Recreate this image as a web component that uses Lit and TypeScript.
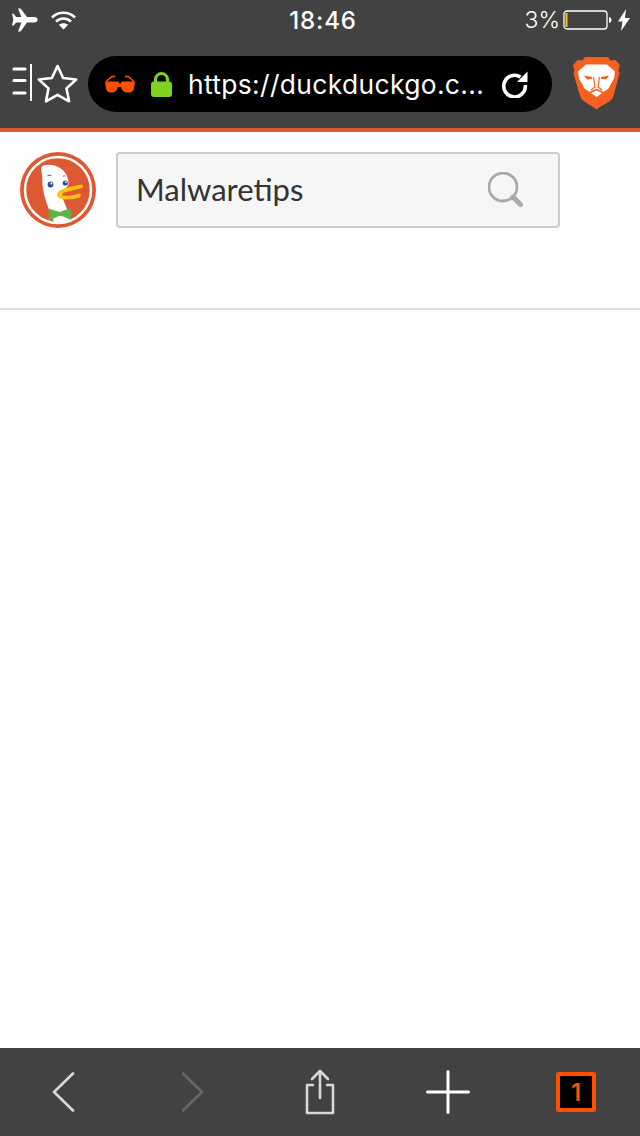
import { LitElement, html, css } from "lit";
import { customElement } from "lit/decorators.js";

@customElement("app-root")
export class AppRoot extends LitElement {
  static styles = css`
    :host { display: flex; flex-direction: column; width: 640px; height: 1136px; background: #fff; font-family: Inter, "Liberation Sans", sans-serif; overflow: hidden; }
    svg { display: block; flex: none; }
    .top { background: #424242; border-bottom: 4px solid #de5833; height: 132px; box-sizing: border-box; flex: none; display: flex; flex-direction: column; }
    .status { height: 40px; flex: none; display: grid; grid-template-columns: 1fr auto 1fr; align-items: center; color: #fff; padding: 0 10px 0 12px; box-sizing: border-box; }
    .left { display: flex; align-items: center; gap: 13px; }
    .time { font-size: 24px; font-weight: 500; letter-spacing: 0.9px; margin-left: 4px; }
    .right { display: flex; align-items: center; justify-content: flex-end; font-size: 23px; font-weight: 300; }
    .pct { margin-right: 3px; letter-spacing: 0; }
    .bolt { margin-left: 5px; }
    .toolbar { height: 88px; flex: none; box-sizing: border-box; display: flex; align-items: flex-start; padding: 16px 0 0 12px; }
    .tools { display: flex; align-items: center; height: 56px; width: 76px; }
    .pill { width: 464px; height: 56px; border-radius: 28px; background: #000; display: flex; align-items: center; color: #fff; font-size: 26.4px; font-weight: 400; padding-left: 16px; box-sizing: border-box; }
    .lock { margin-left: 15px; }
    .url { margin-left: 16px; width: 313px; white-space: nowrap; letter-spacing: 0.36px; }
    .brave { margin-left: 21px; margin-top: 1px; }
    .page { flex: 1; }
    .head { display: flex; align-items: flex-start; gap: 20px; padding: 20px 0 0 20px; height: 178px; box-sizing: border-box; border-bottom: 2px solid #ddd; }
    .search { width: 444px; height: 76px; box-sizing: border-box; border: 2px solid #ccc; border-radius: 4px; background: #f6f6f6; display: flex; align-items: center; justify-content: space-between; padding: 0 34px 0 18px; color: #333; font-family: Lato, "Open Sans", sans-serif; font-size: 31px; }
    .search span { margin-top: -3px; }
    .bottom { height: 88px; background: #424242; flex: none; display: flex; align-items: center; }
    .slot { display: flex; justify-content: center; flex: none; }
    .s-back { width: 128px; }
    .s-fwd { width: 127px; }
    .s-share { width: 130px; }
    .s-plus { width: 125px; }
    .s-tabs { width: 132px; }
    .tabs { width: 40px; height: 40px; box-sizing: border-box; border: 4px solid #ff5000; border-radius: 3px; background: #000; color: #ff5000; font-family: Inter, sans-serif; font-weight: 600; font-size: 24px; display: flex; align-items: center; justify-content: center; }
  `;

  render() {
    return html`
      <div class="top">
        <div class="status">
          <div class="left">
            <svg width="26" height="24" viewBox="0 0 26 24"><path fill="#fff" d="M6 0.5h2.600L15 9h7.200c2.200 0 3.400 1.300 3.400 2.700s-1.200 2.700-3.400 2.700H15L8.600 23.500H6l3.400-9.100H4.200L1.600 17.600H0l1.300-5.900L0 5.800h1.600l2.600 3.200h5.200z"/></svg>
            <svg width="25" height="20" viewBox="0 0 25 20"><g fill="none" stroke="#fff" stroke-width="2.600"><path d="M1 7.500C7.500 1.200 17.500 1.200 24 7.500"/><path d="M5 11.500c4.400-4 10.600-4 15 0"/></g><path fill="#fff" d="M12.500 19.500 7.800 14.800c2.800-2.200 6.600-2.200 9.400 0z"/></svg>
          </div>
          <div class="time">18:46</div>
          <div class="right">
            <span class="pct">3%</span>
            <svg width="50" height="20" viewBox="0 0 50 20"><rect x="1" y="1" width="43" height="18" rx="3" fill="none" stroke="#fff" stroke-width="1.300"/><rect x="2.500" y="3" width="2" height="14" fill="#f5c518"/><path fill="#fff" d="M46 7c1.600.4 2.500 1.500 2.500 3s-.9 2.600-2.500 3z"/></svg>
            <svg class="bolt" width="12" height="22" viewBox="0 0 12 22"><path fill="#fff" d="M8 0 0 12.500h4.500L3 22l9-13H7z"/></svg>
          </div>
        </div>
        <div class="toolbar">
          <div class="tools">
            <svg width="66" height="42" viewBox="0 0 66 42">
              <g stroke="#fff" stroke-linecap="round" fill="none">
                <path stroke-width="3.200" d="M2 6h11M2 17.500h11M2 30h11"/>
                <path stroke-width="2" stroke-linecap="butt" d="M19 1v37"/>
              </g>
              <path fill="none" stroke="#fff" stroke-width="2.600" stroke-linejoin="round" d="M45.500 3l5.600 12 13.100 1.500-9.700 8.900 2.600 12.900-11.600-6.500-11.500 6.500 2.500-12.900-9.700-8.900 13.100-1.500z"/>
            </svg>
          </div>
          <div class="pill">
            <svg width="32" height="18" viewBox="0 0 32 18">
              <path fill="none" stroke="#ff5000" stroke-width="1.500" d="M2 6.500 8 1.500h3M30 6.500 24 1.500h-3"/>
              <path fill="#ff5000" d="M1 6.500h13.500l.6 2h1.800l.6-2H31l-.8 5.500c-.4 3-2 5.500-4.500 5.500h-3.500c-2.500 0-4.200-2.500-5-5.500h-3.400c-.8 3-2.500 5.500-5 5.500H6.300c-2.500 0-4.100-2.500-4.500-5.500z"/>
            </svg>
            <svg class="lock" width="21" height="25" viewBox="0 0 21 25">
              <path fill="none" stroke="#7ed321" stroke-width="3" d="M4.500 11V7.500a6 6 0 0 1 12 0V11"/>
              <rect x="0" y="9.500" width="21" height="15.500" rx="3" fill="#7ed321"/>
            </svg>
            <span class="url">https://duckduckgo.c...</span>
            <svg width="27" height="27" viewBox="0 0 27 27">
              <path fill="none" stroke="#fff" stroke-width="3.600" d="M19.500 6.100A10.800 10.800 0 1 0 24.300 14"/>
              <path fill="#fff" d="M26.500 0.500V11H16z"/>
            </svg>
          </div>
          <svg class="brave" width="47" height="53" viewBox="0 0 47 53">
            <path fill="#f4601f" d="M12 0h23l2.500 3.500 5-.5L47 8l-1.500 5 1 3.500-6 22.500c-1 3-2.500 4.500-5 6L26 50.500c-1.500 1-2 2-2.500 2s-1-1-2.500-2L12 45c-2.500-1.500-4-3-5-6L.5 16.500l1-3.500L0 8l4.500-5 5 .5z"/>
            <path fill="#fff" d="M13 7.500h21L42 14.500l-1 7-5.500 10-5 3.500-7 5-7-5-5-3.500L6 21.500l-1-7z"/>
            <g fill="#f4601f">
              <path d="M11 18.500 19 20l.3 1.800-5.300.7z"/>
              <path d="M36 18.500 28 20l-.3 1.800 5.300.7z"/>
            </g>
            <g fill="none" stroke="#f4601f" stroke-linejoin="round">
              <path stroke-width="1.200" d="M20.500 20l1.500 10-4 3"/>
              <path stroke-width="1.200" d="M26.500 20l-1.500 10 4 3"/>
              <path stroke-width="1.600" d="M15 36.500 23.500 32.500 32 36.500"/>
            </g>
          </svg>
        </div>
      </div>
      <div class="page">
        <div class="head">
          <svg width="76" height="76" viewBox="0 0 76 76">
            <circle cx="38" cy="38" r="38" fill="#de5833"/>
            <circle cx="38" cy="38" r="33" fill="none" stroke="#fff" stroke-width="2.500"/>
            <path fill="#fff" d="M23 13.500c6-1.500 12-.5 17 2.500 5 3 8 8 8.500 14 .3 3-1 5-4 7-2.500 2-3 5-2 9l9 22-6 2.500-11 .5-3.500-8C27 52 22 40 22.300 28c0-4.500-1-8-1-10.500 0-2 .5-3.500 1.700-4z"/>
            <path fill="#2d4f8e" d="M26.500 24.500c1.500-1.800 4-2.300 6-1-2 0-4.200.2-6 1zM42 24.500c1.300-1.200 3-1.300 4.500-.3-1.500 0-3 0-4.500.3z"/>
            <circle cx="30.500" cy="32.500" r="2.900" fill="#2d4f8e"/><circle cx="45.300" cy="31" r="2.600" fill="#2d4f8e"/>
            <circle cx="31.300" cy="31.600" r="1" fill="#fff"/><circle cx="46" cy="30.200" r="0.900" fill="#fff"/>
            <path fill="none" stroke="#fcc20a" stroke-width="3.800" stroke-linecap="round" stroke-linejoin="round" d="M61 34.500C52 36.500 39.500 38.500 39 42.500c-.4 3.500 11 4.500 20 1"/>
            <path fill="#5cb645" d="M30 57l9.500 3 10-3.500c1-.3 1.500 0 1.500 1l.5 9c0 1-.7 1.300-1.500 1l-8-3.500h-3L30.500 68c-1 .4-1.500 0-1.500-1l-.5-9c0-.8.700-1.200 1.500-1z"/>
          </svg>
          <div class="search">
            <span>Malwaretips</span>
            <svg width="36" height="36" viewBox="0 0 36 36"><circle cx="15" cy="15" r="14" fill="none" stroke="#aaa" stroke-width="2.800"/><path stroke="#aaa" stroke-width="5" stroke-linecap="round" d="M25 25l7.500 7.500"/></svg>
          </div>
        </div>
      </div>
      <div class="bottom">
        <div class="slot s-back"><svg width="24" height="40" viewBox="0 0 24 40"><path fill="none" stroke="#d8d8d8" stroke-width="2.600" stroke-linecap="round" stroke-linejoin="round" d="M21 1.500 2 20l19 18.500"/></svg></div>
        <div class="slot s-fwd"><svg width="24" height="40" viewBox="0 0 24 40"><path fill="none" stroke="#666" stroke-width="2.600" stroke-linecap="round" stroke-linejoin="round" d="M3 1.500 22 20 3 38.500"/></svg></div>
        <div class="slot s-share"><svg width="30" height="46" viewBox="0 0 30 46"><g fill="none" stroke="#d8d8d8" stroke-width="2.600" stroke-linecap="round" stroke-linejoin="round"><path d="M8 16H2v28h26V16h-6"/><path d="M15 29V2M7 10l8-8 8 8"/></g></svg></div>
        <div class="slot s-plus"><svg width="44" height="44" viewBox="0 0 44 44"><path stroke="#fff" stroke-width="3" stroke-linecap="round" d="M22 1.500v41M1.500 22h41"/></svg></div>
        <div class="slot s-tabs"><div class="tabs">1</div></div>
      </div>
    `;
  }
}
